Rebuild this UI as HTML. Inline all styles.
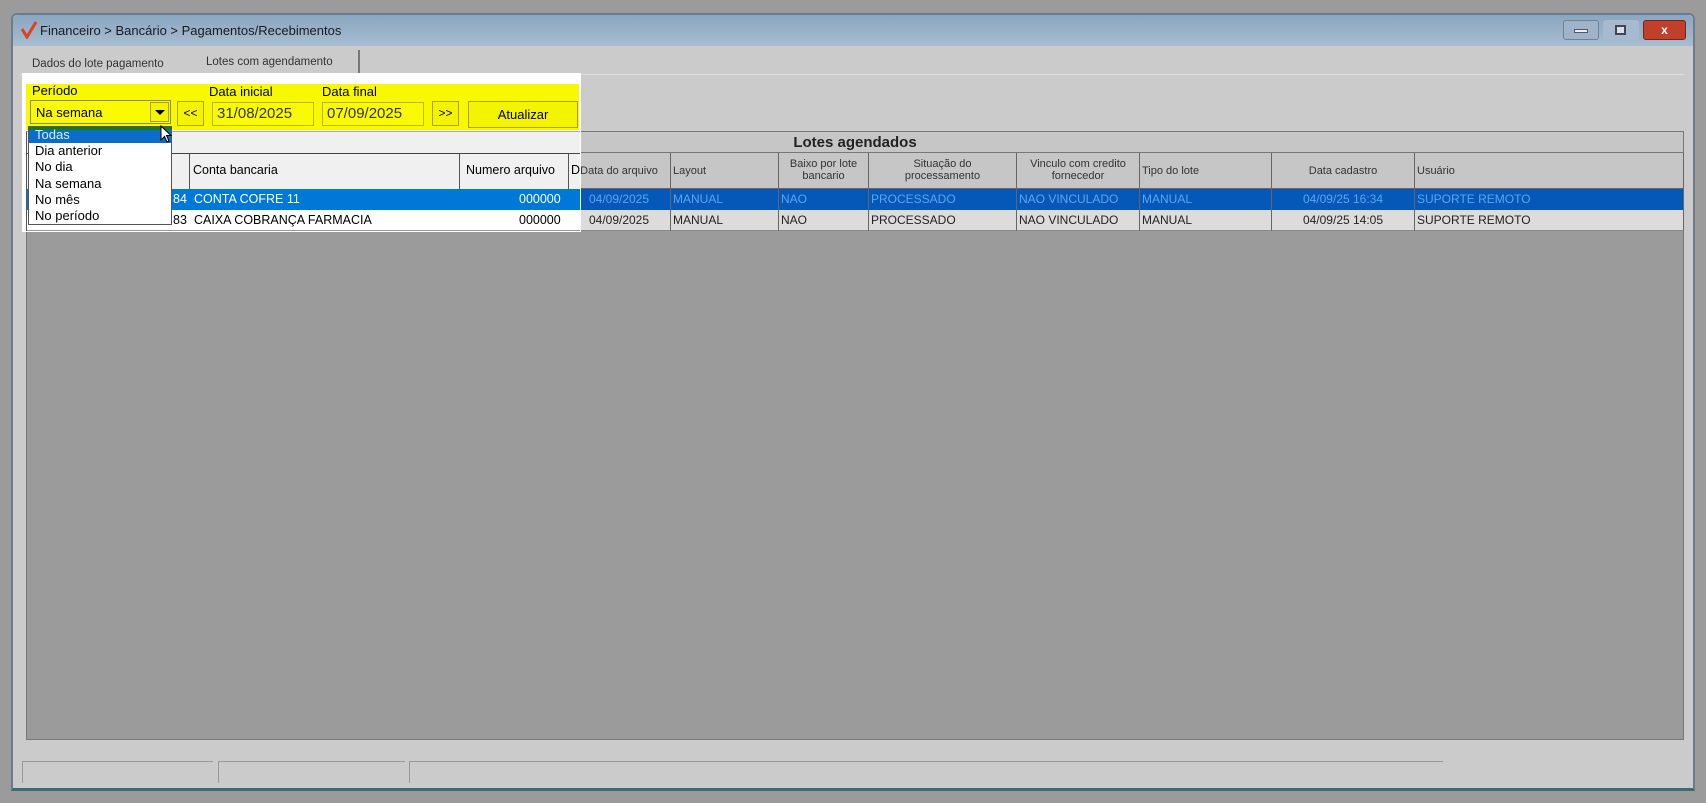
<!DOCTYPE html>
<html><head><meta charset="utf-8"><style>
*{box-sizing:border-box;margin:0;padding:0}
body{width:1706px;height:803px;background:#9b9b9b;position:relative;overflow:hidden;font-family:"Liberation Sans",sans-serif;font-size:12px;color:#000}
.a{position:absolute}
.win{left:11px;top:13px;width:1684px;height:778px;background:#cbcbcb;border:2px solid #6a7d8c;border-bottom:3px solid #3e6a78;border-radius:6px 6px 0 0}
.title{left:13px;top:15px;width:1680px;height:31px;background:linear-gradient(#8aa6c0,#a7bdd1);border-radius:5px 5px 0 0}
.tt{left:40px;top:23px;font-size:13px;color:#1a1a1a}
.grid{left:26px;top:131px;width:1658px;height:609px;background:#9b9b9b;border:1px solid #777}
.cell{position:absolute;border-right:1px solid #666;overflow:hidden;white-space:nowrap;padding:0 2px}
.hd{font-size:11px;color:#333;background:#c6c6c6;text-align:center;line-height:12px}
.r1{background:#0658b8;color:#5aa5f0;line-height:21px;height:21px}
.r2{background:#dcdcdc;color:#222;line-height:21px;height:21px;border-bottom:1px solid #888}
.yb{background:#fbfb00;border:1px solid #b8b800}
.btn{background:#f4f400;border:1px solid #aaa200;text-align:center}
</style></head><body>
<div class="a win"></div>
<div class="a title"></div>
<svg class="a" style="left:20px;top:21px" width="18" height="18"><path d="M2 8 L7 16 L16 1" stroke="#e0401a" stroke-width="3" fill="none"/></svg>
<div class="a tt">Financeiro &gt; Bancário &gt; Pagamentos/Recebimentos</div>
<div class="a" style="left:1563px;top:20px;width:36px;height:20px;background:#9fb4c8;border:1px solid #6d8398;border-radius:3px"></div>
<div class="a" style="left:1574px;top:29px;width:14px;height:4px;background:#e8eef4;border:1px solid #556"></div>
<div class="a" style="left:1603px;top:20px;width:36px;height:20px;background:#a6bad0;border-radius:3px"></div>
<div class="a" style="left:1615px;top:25px;width:11px;height:10px;border:2px solid #445;background:#d8e0e8"></div>
<div class="a" style="left:1643px;top:20px;width:43px;height:20px;background:#c0402c;border:1px solid #7a2418;border-radius:3px;color:#fff;text-align:center;font-weight:bold;line-height:18px">x</div>
<div class="a" style="left:22px;top:52px;width:168px;height:22px;color:#333;padding:6px 0 0 10px;font-size:11.5px">Dados do lote pagamento</div>
<div class="a" style="left:192px;top:50px;width:168px;height:24px;color:#333;padding:6px 0 0 14px;border-right:2px solid #777;font-size:11.5px">Lotes com agendamento</div>
<div class="a" style="left:20px;top:74px;width:1664px;height:4px;border-top:1px solid #ddd"></div>

<div class="a grid">
 <div class="a" style="left:0;top:0;width:1656px;height:22px;background:#c6c6c6;border-bottom:2px solid #777;text-align:center;font-weight:bold;font-size:15px;line-height:22px;color:#222">Lotes agendados</div>
</div>
<div class="a" style="left:26px;top:153px;width:1658px;height:78px">
 <div class="cell hd" style="left:0;width:72px;height:36px;"></div>
 <div class="cell hd" style="left:72px;width:91px;height:36px;text-align:right;padding-top:20px">o</div>
 <div class="cell hd" style="left:163px;width:270px;height:36px;text-align:left;line-height:36px;font-size:12px">Conta bancaria</div>
 <div class="cell hd" style="left:433px;width:109px;height:36px;line-height:36px;font-size:12px">Numero arquivo</div>
 <div class="cell hd" style="left:542px;width:103px;height:36px;line-height:36px">Data do arquivo</div>
 <div class="cell hd" style="left:645px;width:108px;height:36px;line-height:36px;text-align:left">Layout</div>
 <div class="cell hd" style="left:753px;width:90px;height:36px;padding-top:5px">Baixo por lote<br>bancario</div>
 <div class="cell hd" style="left:843px;width:148px;height:36px;padding-top:5px">Situação do<br>processamento</div>
 <div class="cell hd" style="left:991px;width:123px;height:36px;padding-top:5px">Vinculo com credito<br>fornecedor</div>
 <div class="cell hd" style="left:1114px;width:132px;height:36px;line-height:36px;text-align:left">Tipo do lote</div>
 <div class="cell hd" style="left:1246px;width:143px;height:36px;line-height:36px">Data cadastro</div>
 <div class="cell hd" style="left:1389px;width:269px;height:36px;line-height:36px;text-align:left">Usuário</div>
 <div class="a" style="left:0;top:35px;width:1658px;height:1px;background:#666"></div>
 <div class="a r1" style="left:0;top:36px;width:1658px"></div>
 <div class="a r2" style="left:0;top:57px;width:1658px"></div>
 <div class="cell r1" style="left:542px;top:36px;width:103px;text-align:center">04/09/2025</div>
 <div class="cell r1" style="left:645px;top:36px;width:108px">MANUAL</div>
 <div class="cell r1" style="left:753px;top:36px;width:90px">NAO</div>
 <div class="cell r1" style="left:843px;top:36px;width:148px">PROCESSADO</div>
 <div class="cell r1" style="left:991px;top:36px;width:123px">NAO VINCULADO</div>
 <div class="cell r1" style="left:1114px;top:36px;width:132px">MANUAL</div>
 <div class="cell r1" style="left:1246px;top:36px;width:143px;text-align:center">04/09/25 16:34</div>
 <div class="cell r1" style="left:1389px;top:36px;width:269px">SUPORTE REMOTO</div>
 <div class="cell r2" style="left:542px;top:57px;width:103px;text-align:center">04/09/2025</div>
 <div class="cell r2" style="left:645px;top:57px;width:108px">MANUAL</div>
 <div class="cell r2" style="left:753px;top:57px;width:90px">NAO</div>
 <div class="cell r2" style="left:843px;top:57px;width:148px">PROCESSADO</div>
 <div class="cell r2" style="left:991px;top:57px;width:123px">NAO VINCULADO</div>
 <div class="cell r2" style="left:1114px;top:57px;width:132px">MANUAL</div>
 <div class="cell r2" style="left:1246px;top:57px;width:143px;text-align:center">04/09/25 14:05</div>
 <div class="cell r2" style="left:1389px;top:57px;width:269px">SUPORTE REMOTO</div>
</div>

<!-- highlighted panel -->
<div class="a" style="left:22px;top:73px;width:559px;height:159px;background:#fff"></div>
<div class="a" style="left:26px;top:131px;width:554px;height:100px;background:#f0f0f0;border-left:1px solid #555;border-top:1px solid #aaa"></div>
<div class="a" style="left:26px;top:153px;width:554px;height:1px;background:#444"></div>
<div class="a" style="left:98px;top:154px;width:1px;height:77px;background:#555"></div>
<div class="a" style="left:189px;top:154px;width:1px;height:77px;background:#555"></div>
<div class="a" style="left:459px;top:154px;width:1px;height:77px;background:#555"></div>
<div class="a" style="left:568px;top:154px;width:1px;height:77px;background:#555"></div>
<div class="a" style="left:193px;top:163px;font-size:12.5px">Conta bancaria</div>
<div class="a" style="left:466px;top:163px;font-size:12.5px">Numero arquivo</div>
<div class="a" style="left:571px;top:163px;font-size:12.5px">D</div>
<div class="a" style="left:27px;top:189px;width:553px;height:21px;background:#0078d7"></div>
<div class="a" style="left:27px;top:210px;width:553px;height:21px;background:#fff;border-bottom:1px solid #999"></div>
<div class="a" style="left:173px;top:192px;color:#fff;font-size:12.5px">84</div>
<div class="a" style="left:173px;top:213px;font-size:12.5px">83</div>
<div class="a" style="left:194px;top:192px;color:#fff;font-size:12.5px">CONTA COFRE 11</div>
<div class="a" style="left:194px;top:213px;font-size:12.5px">CAIXA COBRANÇA FARMACIA</div>
<div class="a" style="left:519px;top:192px;color:#fff;font-size:12.5px">000000</div>
<div class="a" style="left:519px;top:213px;font-size:12.5px">000000</div>
<div class="a" style="left:26px;top:84px;width:553px;height:46px;background:#f8f800"></div>
<div class="a" style="left:32px;top:83px;font-size:13px">Período</div>
<div class="a" style="left:209px;top:84px;font-size:13px">Data inicial</div>
<div class="a" style="left:322px;top:84px;font-size:13px">Data final</div>
<div class="a yb" style="left:30px;top:100px;width:141px;height:24px;border-color:#888"></div>
<div class="a" style="left:36px;top:105px;font-size:13px">Na semana</div>
<div class="a btn" style="left:150px;top:102px;width:19px;height:20px"></div>
<div class="a" style="left:155px;top:110px;width:0;height:0;border-left:5px solid transparent;border-right:5px solid transparent;border-top:5px solid #000"></div>
<div class="a btn" style="left:177px;top:101px;width:27px;height:25px;line-height:23px">&lt;&lt;</div>
<div class="a yb" style="left:212px;top:102px;width:102px;height:24px;font-size:15px;line-height:22px;padding-left:4px;color:#333">31/08/2025</div>
<div class="a yb" style="left:322px;top:102px;width:102px;height:24px;font-size:15px;line-height:22px;padding-left:4px;color:#333">07/09/2025</div>
<div class="a btn" style="left:432px;top:101px;width:27px;height:25px;line-height:23px">&gt;&gt;</div>
<div class="a btn" style="left:468px;top:101px;width:110px;height:27px;line-height:25px;font-size:13px">Atualizar</div>
<div class="a" style="left:28px;top:126px;width:144px;height:99px;background:#fff;border:1px solid #555"></div>
<div class="a" style="left:29px;top:127px;width:142px;height:16px;background:#0a6ec8;border-top:3px solid #1a7a1a"></div>
<div class="a" style="left:35px;top:127px;color:#d8ecff;font-size:13px;line-height:16px">Todas</div>
<div class="a" style="left:35px;top:143px;font-size:13px;line-height:16.3px">Dia anterior<br>No dia<br>Na semana<br>No mês<br>No período</div>
<svg class="a" style="left:160px;top:125px" width="14" height="20"><path d="M1 1 L1 15 L4.5 11.5 L7 17 L9 16 L6.5 10.5 L11 10.5 Z" fill="#fff" stroke="#000" stroke-width="1"/></svg>

<!-- status bar -->
<div class="a" style="left:22px;top:761px;width:191px;height:22px;border-left:1px solid #999;border-top:1px solid #999"></div>
<div class="a" style="left:218px;top:761px;width:187px;height:22px;border-left:1px solid #999;border-top:1px solid #999"></div>
<div class="a" style="left:409px;top:761px;width:1034px;height:22px;border-left:1px solid #999;border-top:1px solid #999"></div>
</body></html>
